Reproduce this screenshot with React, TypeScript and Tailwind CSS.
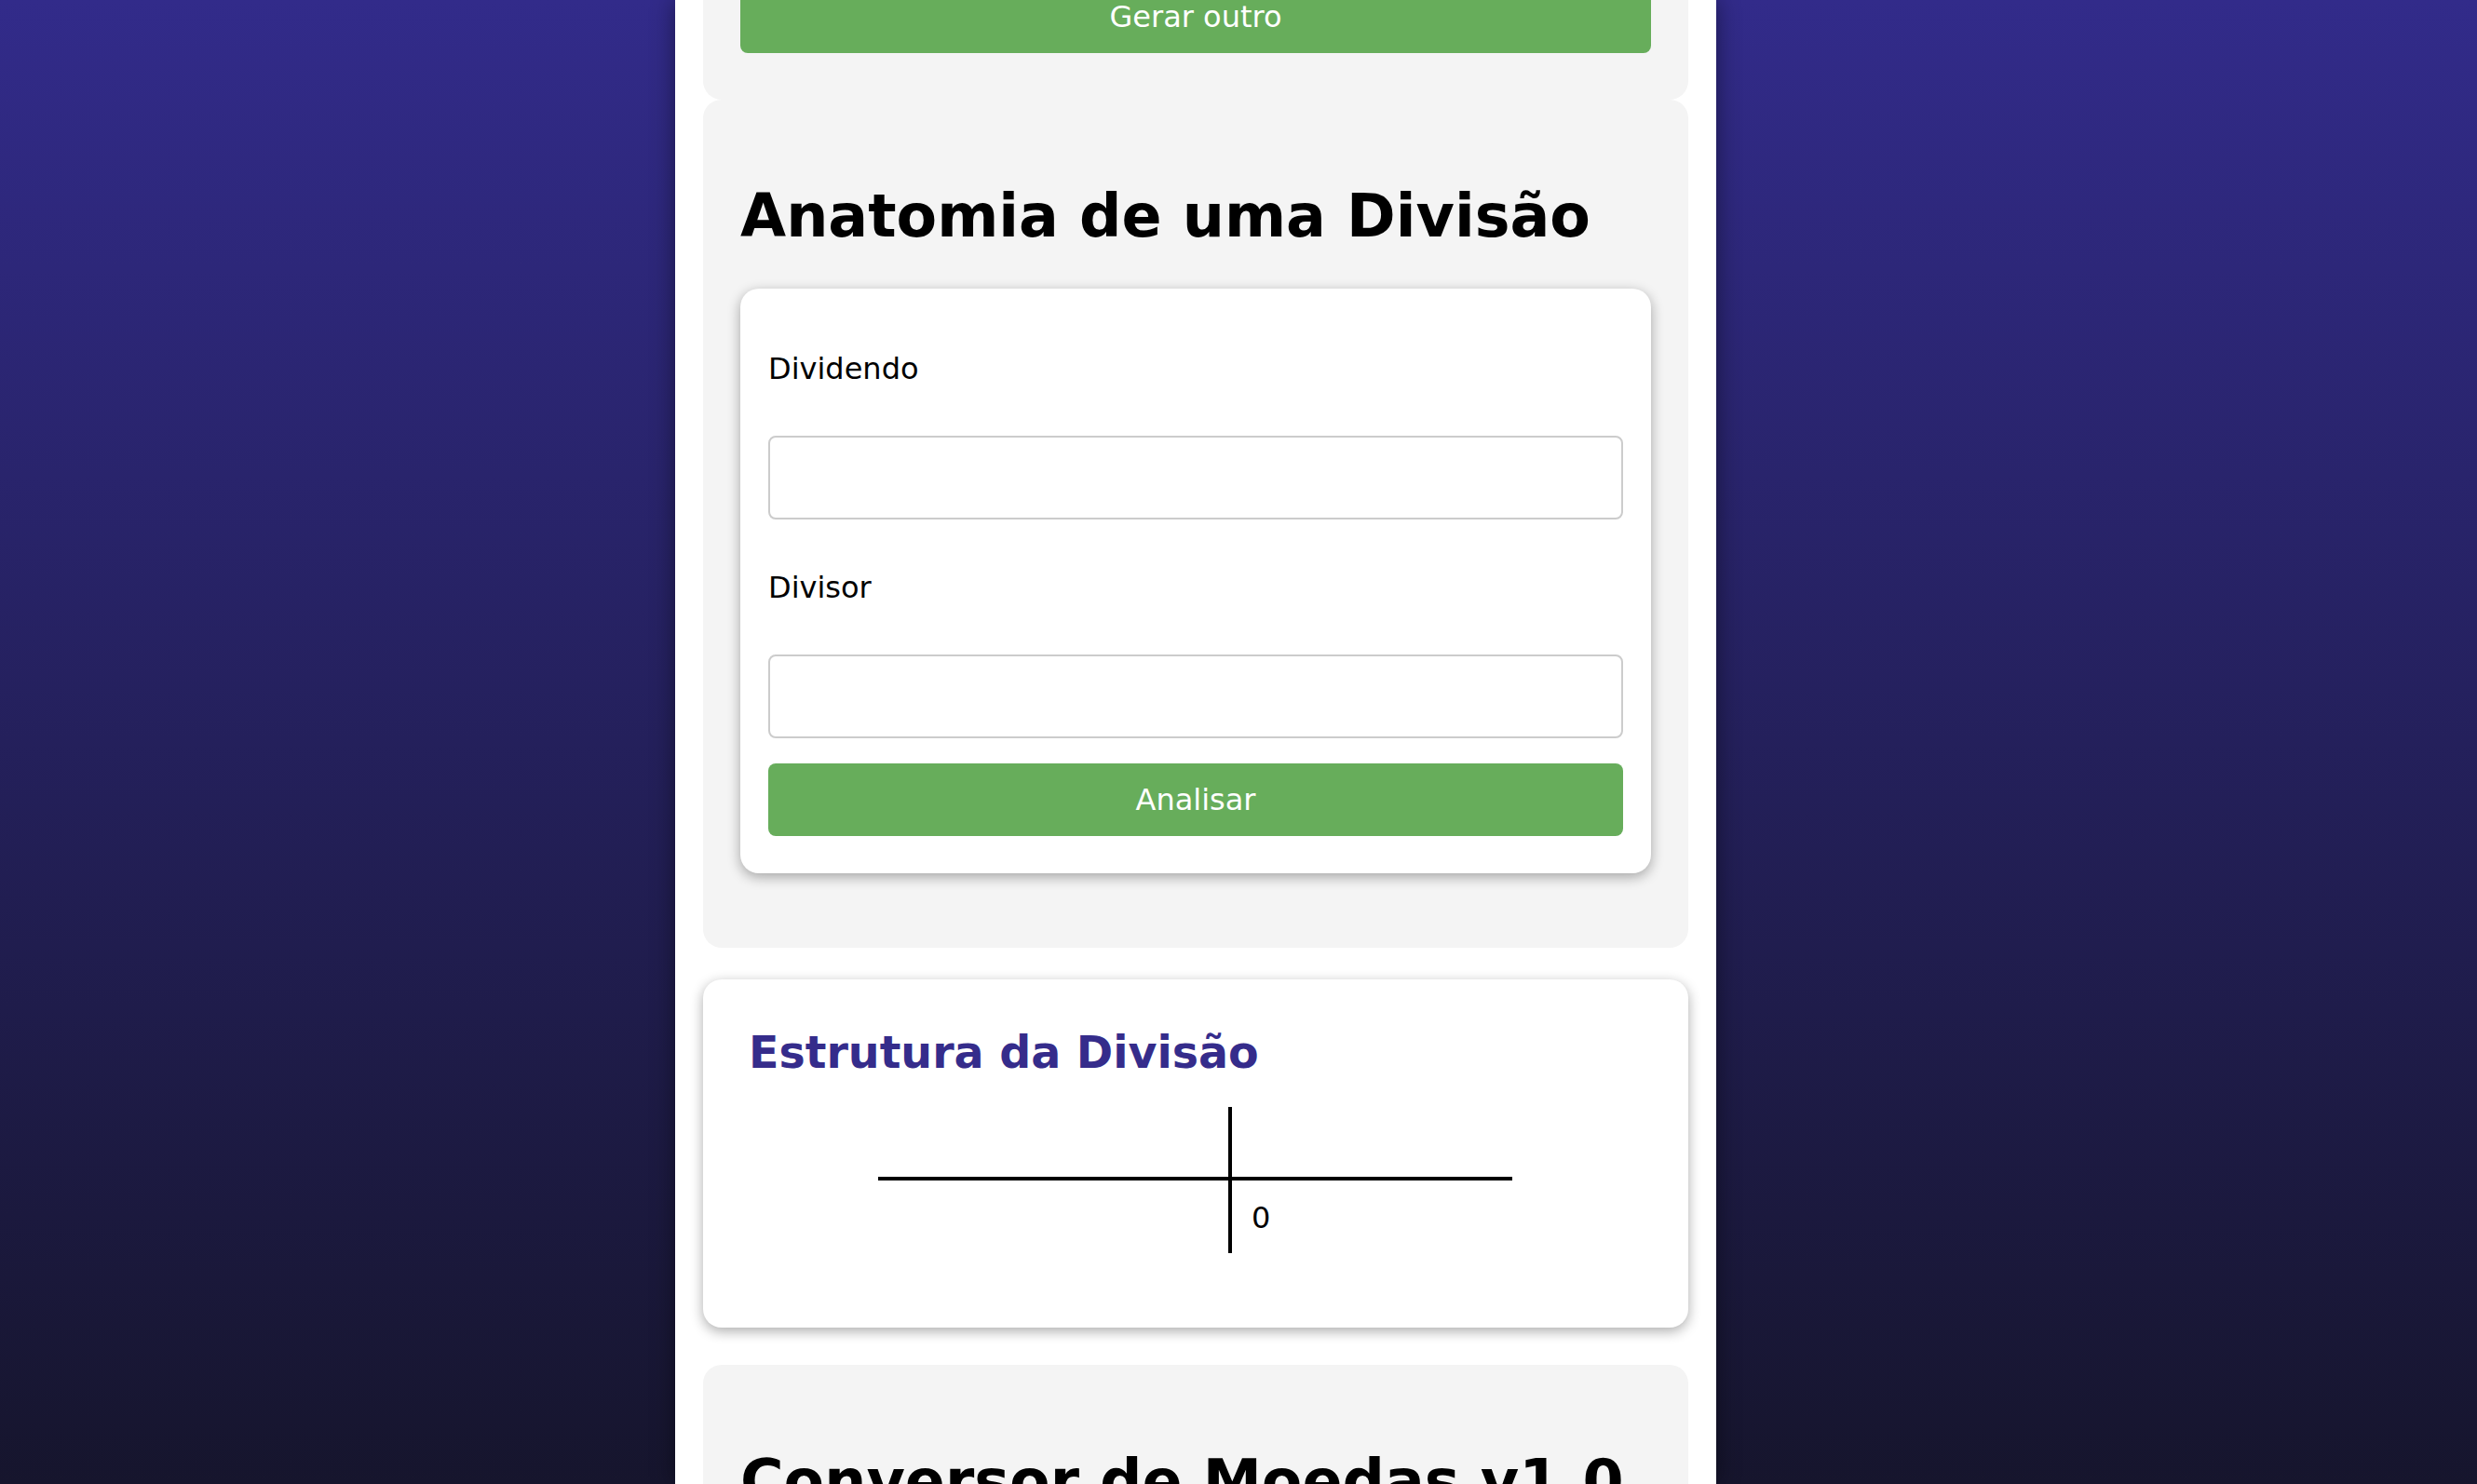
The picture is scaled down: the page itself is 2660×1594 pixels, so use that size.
import React from "react";

export default function App() {
  return (
    <div className="h-[1594px] w-full overflow-hidden bg-[linear-gradient(to_bottom,#322b8a,#16152d)] font-['DejaVu_Sans',Verdana,sans-serif] text-black">
      <div className="ml-[725px] flex h-full w-[1118px] flex-col bg-white px-[30px] shadow-[0_0_24px_rgba(0,0,0,0.45)]">
        {/* Card 1: cut off at top */}
        <div className="-mt-[61px] rounded-[20px] bg-[#f4f4f4] px-[40px] pb-[50px] pt-[40px]">
          <button className="h-[78px] w-full rounded-[8px] bg-[#67ad5b] text-[32px] leading-[37px] text-white">
            Gerar outro
          </button>
        </div>

        {/* Card 2: Anatomia */}
        <div className="rounded-[20px] bg-[#f4f4f4] px-[40px] pb-[80px] pt-[88px]">
          <h2 className="text-[63.5px] font-bold leading-[75px]">Anatomia de uma Divisão</h2>
          <div className="mt-[40px] flex flex-col rounded-[20px] bg-white px-[30px] pb-[40px] pt-[68px] shadow-[0_4px_14px_rgba(0,0,0,0.33)]">
            <label className="block text-[32px] leading-[37px]">Dividendo</label>
            <input
              type="text"
              className="mt-[53px] h-[90px] w-full rounded-[8px] border-2 border-[#cccccc] bg-white px-4 text-[32px] outline-none"
            />
            <label className="mt-[55px] block text-[32px] leading-[37px]">Divisor</label>
            <input
              type="text"
              className="mt-[53px] h-[90px] w-full rounded-[8px] border-2 border-[#cccccc] bg-white px-4 text-[32px] outline-none"
            />
            <button className="mt-[27px] h-[78px] w-full rounded-[8px] bg-[#67ad5b] text-[32px] leading-[37px] text-white">
              Analisar
            </button>
          </div>
        </div>

        {/* Card 3: Estrutura */}
        <div className="mt-[34px] rounded-[20px] bg-white pb-[80px] pl-[49px] pr-[50px] pt-[51px] shadow-[0_4px_14px_rgba(0,0,0,0.33)]">
          <h3 className="text-[47.5px] font-bold leading-[56px] text-[#352c8b]">Estrutura da Divisão</h3>
          <div className="mx-auto mt-[30px] grid w-[681px] grid-cols-[376px_305px]">
            <div className="h-[79px] border-b-4 border-black" />
            <div className="h-[79px] border-b-4 border-l-4 border-black" />
            <div className="h-[78px]" />
            <div className="h-[78px] border-l-4 border-black pl-[21px] pt-[22px] text-[32px] leading-[37px]">0</div>
          </div>
        </div>

        {/* Card 4: Conversor */}
        <div className="mt-[40px] rounded-[20px] bg-[#f4f4f4] px-[40px] pb-[80px] pt-[88px]">
          <h2 className="text-[63.5px] font-bold leading-[75px]">Conversor de Moedas v1.0</h2>
        </div>
      </div>
    </div>
  );
}
